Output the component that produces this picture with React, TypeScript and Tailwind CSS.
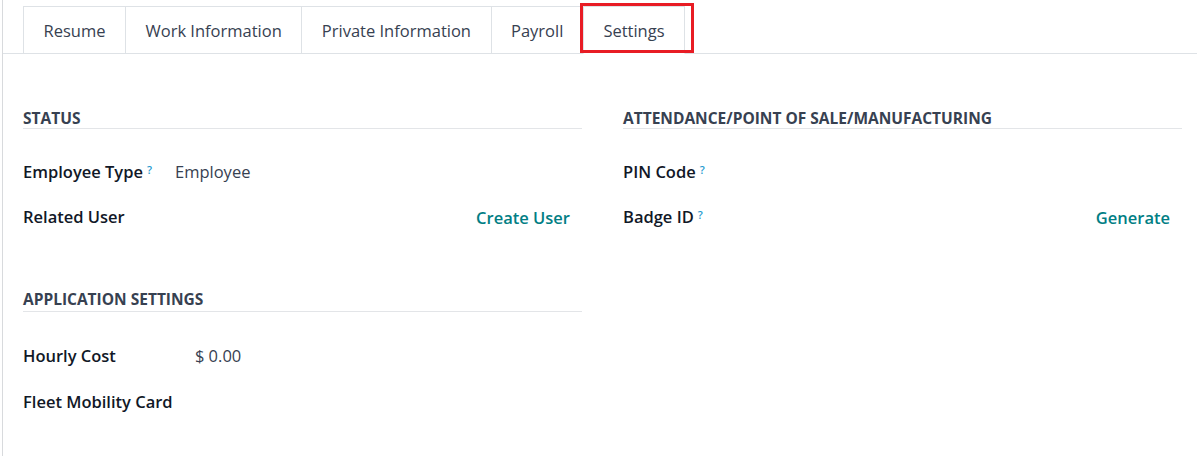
import React from "react";

const tabs = ["Resume", "Work Information", "Private Information", "Payroll", "Settings"];

function Help() {
  return <sup className="ml-[4px] text-[11px] font-semibold text-[#1f9bd0] relative -top-[3px]">?</sup>;
}

function Heading({ children, h = "h-[21px]" }: { children: React.ReactNode; h?: string }) {
  return (
    <div className={`${h} border-b border-[#e3e5e8] text-[15.5px] font-bold uppercase leading-[20px] text-[#374151]`}>
      {children}
    </div>
  );
}

function Row({
  label,
  help,
  value,
  valueLeft,
  link,
  h = "h-[45px]",
}: {
  label: string;
  help?: boolean;
  value?: string;
  valueLeft?: string;
  link?: string;
  h?: string;
}) {
  return (
    <div className={`flex ${h} items-center text-[16.5px]`}>
      <div className="flex shrink-0 items-center font-semibold text-[#111827]">
        {label}
        {help && <Help />}
      </div>
      {value && (
        <div className={`text-[#374151] ${valueLeft}`}>{value}</div>
      )}
      {link && (
        <div className="ml-auto mr-[12px] mt-[2px] font-semibold text-[#017e84]">{link}</div>
      )}
    </div>
  );
}

export default function App() {
  return (
    <div
      className="h-[456px] w-full bg-white pl-[2px]"
      style={{ fontFamily: '"Open Sans", "Noto Sans", sans-serif' }}
    >
      <div className="h-full border-l border-[#d8dadd]">
        {/* Tabs */}
        <div className="relative flex h-[54px] items-end border-b border-[#dee2e6] pl-[20px]">
          {tabs.map((t, i) => {
            const active = t === "Settings";
            return (
              <div
                key={t}
                className={`-mb-px flex h-[48px] items-center border border-[#dee2e6] px-[19.5px] pt-[2px] text-[16.5px] text-[#374151] ${
                  i > 0 ? "-ml-px" : ""
                } ${active ? "border-b-white bg-white" : "border-b-transparent"}`}
              >
                {t}
              </div>
            );
          })}
          {/* annotation */}
          <div className="pointer-events-none absolute left-[577px] top-[3px] h-[50px] w-[114px] border-[3px] border-[#e81c24]" />
        </div>

        {/* Content */}
        <div className="grid grid-cols-2 gap-[41px] pl-[20px] pr-[15px] pt-[54px]">
          <div className="flex flex-col">
            <Heading>Status</Heading>
            <div className="mt-[21px]">
              <Row label="Employee Type" help value="Employee" valueLeft="ml-[23px]" />
              <Row label="Related User" link="Create User" />
            </div>
            <div className="mt-[49px]">
              <Heading h="h-[23px]">Application Settings</Heading>
            </div>
            <div className="mt-[21px]">
              <Row label="Hourly Cost" value="$ 0.00" valueLeft="ml-[79px]" h="h-[46px]" />
              <Row label="Fleet Mobility Card" h="h-[46px]" />
            </div>
          </div>
          <div className="flex flex-col">
            <Heading>Attendance/Point of Sale/Manufacturing</Heading>
            <div className="mt-[21px]">
              <Row label="PIN Code" help />
              <Row label="Badge ID" help link="Generate" />
            </div>
          </div>
        </div>
      </div>
    </div>
  );
}
